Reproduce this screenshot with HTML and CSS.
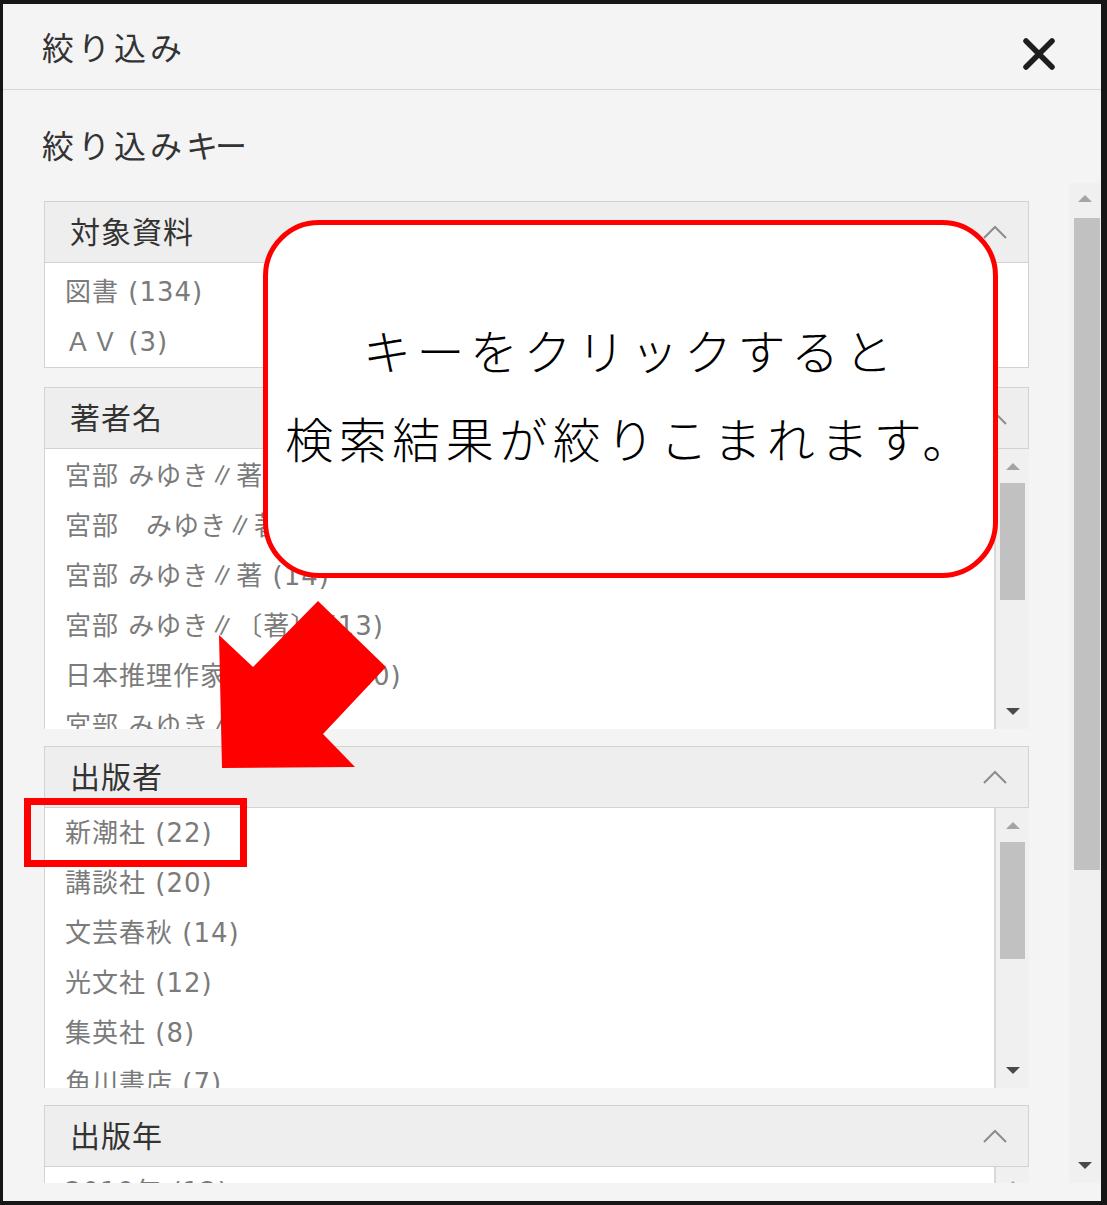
FILE: index.html
```html
<!DOCTYPE html>
<html>
<head>
  <meta charset="utf-8">
  <title>絞り込み</title>
  <link rel="stylesheet" href="styles.css">
</head>
<body>
  <div class="frame">
    <div class="dlg-head">
      <span class="dlg-title">絞り込み</span>
      <svg class="close" width="34" height="34" viewBox="0 0 34 34">
        <path d="M4 4 L30 30 M30 4 L4 30"/>
      </svg>
    </div>
    <div class="keys-label">絞り込み<span class="kana">キー</span></div>

    <div class="scroll">
      <div class="scroll-content">
        <!-- facet: 対象資料 -->
        <section class="facet facet-static">
          <div class="facet-head">
            <span>対象資料</span>
            <svg class="chev" width="24" height="14" viewBox="0 0 24 14"><polyline points="1,13 12,2 23,13"/></svg>
          </div>
          <div class="facet-body">
            <ul class="facet-list">
              <li>図書 (134)</li>
              <li>ＡＶ (3)</li>
            </ul>
          </div>
        </section>

        <!-- facet: 著者名 -->
        <section class="facet">
          <div class="facet-head">
            <span>著者名</span>
            <svg class="chev" width="24" height="14" viewBox="0 0 24 14"><polyline points="1,13 12,2 23,13"/></svg>
          </div>
          <div class="facet-body scrolling">
            <ul class="facet-list">
              <li>宮部 みゆき<span class="sep">∥</span>著 (27)</li>
              <li>宮部　みゆき<span class="sep">∥</span>著 (18)</li>
              <li>宮部 みゆき<span class="sep">∥</span>著 (14)</li>
              <li>宮部 みゆき<span class="sep">∥</span>〔著〕 (13)</li>
              <li>日本推理作家協会<span class="sep">∥</span>編 (10)</li>
              <li>宮部 みゆき<span class="sep">∥</span>作 (6)</li>
            </ul>
            <div class="mini-sb">
              <i class="tri-up"></i>
              <i class="thumb"></i>
              <span class="fill"></span>
              <i class="tri-down"></i>
            </div>
          </div>
        </section>

        <!-- facet: 出版者 -->
        <section class="facet">
          <div class="facet-head">
            <span>出版者</span>
            <svg class="chev" width="24" height="14" viewBox="0 0 24 14"><polyline points="1,13 12,2 23,13"/></svg>
          </div>
          <div class="facet-body scrolling">
            <ul class="facet-list">
              <li>新潮社 (22)</li>
              <li>講談社 (20)</li>
              <li>文芸春秋 (14)</li>
              <li>光文社 (12)</li>
              <li>集英社 (8)</li>
              <li>角川書店 (7)</li>
            </ul>
            <div class="mini-sb">
              <i class="tri-up"></i>
              <i class="thumb"></i>
              <span class="fill"></span>
              <i class="tri-down"></i>
            </div>
          </div>
        </section>

        <!-- facet: 出版年 -->
        <section class="facet">
          <div class="facet-head">
            <span>出版年</span>
            <svg class="chev" width="24" height="14" viewBox="0 0 24 14"><polyline points="1,13 12,2 23,13"/></svg>
          </div>
          <div class="facet-body scrolling">
            <ul class="facet-list">
              <li>2019年 (12)</li>
              <li>2018年 (9)</li>
            </ul>
            <div class="mini-sb">
              <i class="tri-up"></i>
              <i class="thumb"></i>
              <span class="fill"></span>
              <i class="tri-down"></i>
            </div>
          </div>
        </section>
      </div>

      <div class="sb">
        <div class="sb-btn up"><i class="tri-up"></i></div>
        <div class="sb-thumb"></div>
        <div class="fill"></div>
        <div class="sb-btn down"><i class="tri-down"></i></div>
      </div>
    </div>
    <div class="foot"></div>
  </div>

  <!-- annotations over the screenshot -->
  <div class="callout">
    <p>キーをクリックすると</p>
    <p>検索結果が絞りこまれます。</p>
  </div>
  <div class="highlight"></div>
  <svg class="arrow" width="1107" height="1205" viewBox="0 0 1107 1205">
    <polygon points="219,635 253,667 318,601 386,667 323,734 355,767 222,768"/>
  </svg>
</body>
</html>
```

FILE: styles.css
```css
body {
  margin: 0;
  font-family: "Noto Sans CJK JP", sans-serif;
  background: #fff;
}
.frame {
  width: 1107px;
  height: 1205px;
  box-sizing: border-box;
  border-style: solid;
  border-color: #161616;
  border-width: 4px 6px 4px 3px;
  background-color: #f4f4f4;
  display: flex;
  flex-direction: column;
  overflow: hidden;
}
.dlg-head {
  height: 85px;
  flex: none;
  border-bottom: 1px solid #d6d6d6;
  display: flex;
  justify-content: space-between;
  align-items: center;
  padding: 0 45px 0 39px;
}
.dlg-title {
  font-size: 32px;
  line-height: 34px;
  letter-spacing: 4px;
  color: #333;
  padding-bottom: 2px;
}
.close {
  margin-top: 15px;
}
.close path {
  stroke: #1e1e1e;
  stroke-width: 5.5;
  stroke-linecap: round;
  fill: none;
}
.keys-label {
  flex: none;
  height: 93px;
  box-sizing: border-box;
  padding: 37px 0 0 39px;
  font-size: 32px;
  line-height: 34px;
  letter-spacing: 4px;
  color: #333;
}
.keys-label .kana {
  letter-spacing: -3px;
}
.scroll {
  flex: none;
  height: 1000px;
  display: flex;
}
.scroll-content {
  flex: 1;
  overflow: hidden;
  padding: 18px 40px 0 41px;
}
.foot {
  flex: 1;
}

/* facets */
.facet {
  margin-bottom: 17px;
}
.facet-static {
  margin-bottom: 19px;
}
.facet-head {
  height: 62px;
  box-sizing: border-box;
  border: 1px solid #d2d2d2;
  background-color: #eeeeee;
  display: flex;
  align-items: center;
  justify-content: space-between;
  padding: 0 21px 5px 25px;
  font-size: 30px;
  letter-spacing: 1px;
  color: #333;
}
.facet-head .chev {
  margin-top: 5px;
}
.chev polyline {
  fill: none;
  stroke: #8c8c8c;
  stroke-width: 2;
}
.facet-body {
  display: flex;
  background-color: #fff;
  border: 1px solid #d2d2d2;
  border-top: none;
}
.facet-body.scrolling {
  height: 280px;
  background: none;
  border: none;
}
.facet-list {
  flex: 1;
  margin: 0;
  padding: 4px 0 0 20px;
  list-style: none;
  overflow: hidden;
  font-family: "DejaVu Sans", "Noto Sans CJK JP", sans-serif;
  font-size: 26px;
  letter-spacing: 1px;
  color: #7b7b7b;
}
.scrolling .facet-list {
  padding-top: 0;
  background-color: #fff;
  border-left: 1px solid #d2d2d2;
  border-right: 2px solid #d8d8d8;
}
.facet-list li {
  height: 50px;
  line-height: 50px;
  white-space: nowrap;
}
.sep {
  font-family: "Noto Sans CJK JP", sans-serif;
}

/* small scrollbar inside a facet */
.mini-sb {
  width: 33px;
  background-color: #f0f0f0;
  display: flex;
  flex-direction: column;
  align-items: center;
}
.mini-sb .tri-up {
  margin-top: 14px;
}
.mini-sb .thumb {
  display: block;
  width: 25px;
  height: 117px;
  margin-top: 13px;
  background-color: #c1c1c1;
}
.mini-sb .fill {
  flex: 1;
}
.mini-sb .tri-down {
  margin-bottom: 14px;
}

.tri-up {
  display: block;
  width: 0;
  height: 0;
  border-left: 7px solid transparent;
  border-right: 7px solid transparent;
  border-bottom: 7px solid #a4a4a4;
}
.tri-down {
  display: block;
  width: 0;
  height: 0;
  border-left: 7px solid transparent;
  border-right: 7px solid transparent;
  border-top: 7px solid #4a4a4a;
}

/* main scrollbar */
.sb {
  width: 32px;
  background-color: #f0f0f0;
  display: flex;
  flex-direction: column;
  align-items: center;
}
.sb-btn {
  height: 35px;
  width: 100%;
  display: flex;
  align-items: center;
  justify-content: center;
}
.sb-btn.up {
  padding-bottom: 4px;
  box-sizing: border-box;
}
.sb-thumb {
  width: 26px;
  height: 652px;
  margin-left: 4px;
  background-color: #c1c1c1;
}
.sb .fill {
  flex: 1;
}

/* annotations */
.callout {
  position: absolute;
  left: 263px;
  top: 220px;
  width: 735px;
  height: 358px;
  box-sizing: border-box;
  border: 5px solid #ff0000;
  border-radius: 56px;
  background-color: #fff;
  display: flex;
  flex-direction: column;
  justify-content: center;
  align-items: center;
  padding-bottom: 12px;
  font-weight: 300;
  font-size: 48px;
  letter-spacing: 5.5px;
  color: #000;
}
.callout p {
  margin: 0;
  line-height: 88px;
}
.highlight {
  position: absolute;
  left: 24px;
  top: 798px;
  width: 223px;
  height: 69px;
  box-sizing: border-box;
  border: 7px solid #ff0000;
}
.arrow {
  position: absolute;
  left: 0;
  top: 0;
  pointer-events: none;
}
.arrow polygon {
  fill: #ff0000;
}
```
